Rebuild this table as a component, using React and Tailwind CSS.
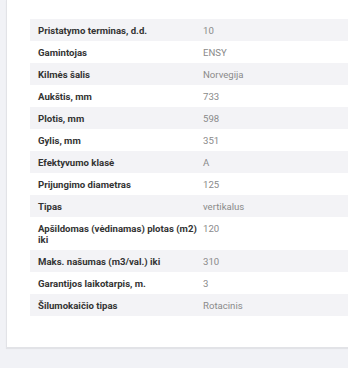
import React from 'react'

const rows = [
  ['Pristatymo terminas, d.d.', '10'],
  ['Gamintojas', 'ENSY'],
  ['Kilmės šalis', 'Norvegija'],
  ['Aukštis, mm', '733'],
  ['Plotis, mm', '598'],
  ['Gylis, mm', '351'],
  ['Efektyvumo klasė', 'A'],
  ['Prijungimo diametras', '125'],
  ['Tipas', 'vertikalus'],
  [['Apšildomas (vėdinamas) plotas (m2)', 'iki'], '120'],
  ['Maks. našumas (m3/val.) iki', '310'],
  ['Garantijos laikotarpis, m.', '3'],
  ['Šilumokaičio tipas', 'Rotacinis'],
]

export default function App() {
  return (
    <div className="w-[348px] h-[368px] overflow-hidden bg-[#f1f2f6] font-['Roboto','Liberation_Sans',sans-serif]">
      <div className="ml-[6px] w-[360px] bg-white border-l border-b border-[#e2e3e7] shadow-[0_1px_1px_rgba(0,0,0,0.06)] pl-[23px] pt-[19px] pb-[31px]">
        <div className="flex flex-col">
          {rows.map(([label, value], i) => (
            <div key={i} className={`flex ${i % 2 === 0 ? 'bg-[#f3f3f6]' : 'bg-white'}`}>
              <div className="w-[166px] shrink-0 pl-[8px] py-[5.5px] text-[9.6px] leading-[11px] font-bold text-[#333]">
                {Array.isArray(label)
                  ? label.map((line) => (
                      <div key={line} className="whitespace-nowrap">{line}</div>
                    ))
                  : label}
              </div>
              <div className="flex-1 pl-[7px] py-[5.5px] text-[9.6px] leading-[11px] text-[#8a8a8a]">
                {value}
              </div>
            </div>
          ))}
        </div>
      </div>
    </div>
  )
}
